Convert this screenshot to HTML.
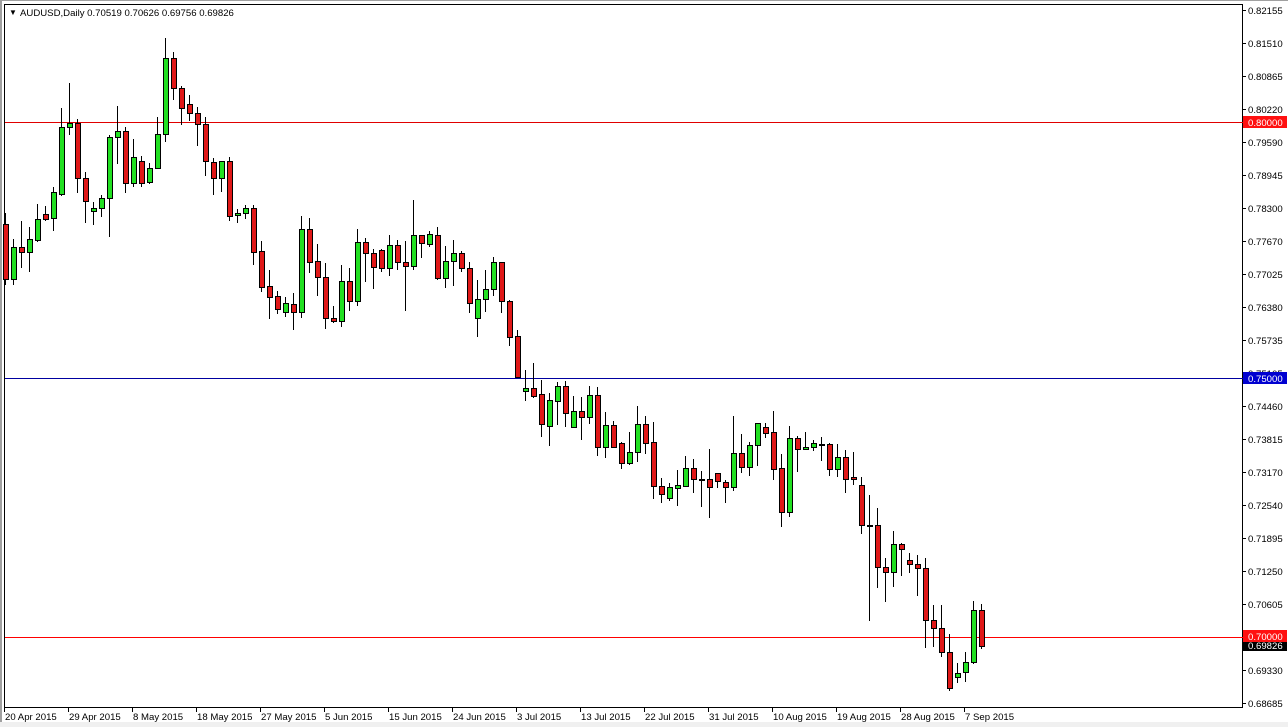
<!DOCTYPE html>
<html><head><meta charset="utf-8"><style>
html,body{margin:0;padding:0;background:#fff;}
body{width:1288px;height:727px;overflow:hidden;position:relative;font-family:"Liberation Sans",sans-serif;}
svg{position:absolute;left:0;top:0;}
</style></head><body>
<svg id="s" width="1288" height="727" xmlns="http://www.w3.org/2000/svg" font-family="Liberation Sans, sans-serif" font-size="9.6">
<rect x="0" y="0" width="1288" height="727" fill="#fff"/>
<rect x="0" y="0" width="2" height="727" fill="#a0a0a0"/>
<rect x="0" y="0" width="1288" height="1" fill="#a0a0a0"/>
<rect x="0" y="722" width="1288" height="5" fill="#f0f0f0"/>
<rect x="4.5" y="4.5" width="1238" height="703" fill="none" stroke="#000" stroke-width="1"/>
<rect x="5" y="122" width="1238" height="1" fill="#e00000"/>
<rect x="5" y="378" width="1238" height="1" fill="#0000a0"/>
<rect x="5" y="637" width="1238" height="1" fill="#ff0000"/>
<g id="c"></g>
<text x="9" y="15" font-size="8">▼</text>
<text x="20" y="16" font-size="9.6">AUDUSD,Daily  0.70519 0.70626 0.69756 0.69826</text>
<g id="ax"></g>
</svg>
<script>
var d=[
[5,213,224,279,285,'r'],[13,239,247,279,285,'g'],[21,221,247,252,268,'r'],[29,227,239,252,272,'g'],[37,204,219,240,242,'g'],[45,206,214,219,221,'r'],[53,187,192,218,231,'g'],[61,108,127,194,196,'g'],[69,83,123,127,135,'g'],[77,119,123,178,193,'r'],[85,172,178,201,223,'r'],[93,202,208,211,225,'g'],[101,195,198,208,217,'g'],[109,135,137,198,237,'g'],[117,106,131,137,164,'g'],[125,127,131,183,193,'r'],[133,139,157,183,187,'g'],[141,156,161,183,187,'r'],[149,163,168,182,184,'g'],[157,117,134,168,169,'g'],[165,38,58,134,142,'g'],[173,52,58,88,100,'r'],[181,86,88,108,125,'r'],[189,95,104,113,121,'r'],[197,107,113,124,146,'r'],[205,117,124,161,176,'r'],[213,158,162,178,195,'r'],[221,161,161,178,192,'g'],[229,157,161,216,221,'r'],[237,209,213,215,223,'g'],[245,205,208,213,219,'g'],
[253,205,208,252,265,'r'],[261,241,251,287,292,'r'],[269,270,286,297,319,'r'],[277,291,296,309,314,'r'],[285,297,303,312,317,'g'],[293,293,304,312,330,'r'],[301,216,229,312,318,'g'],[309,218,229,262,273,'r'],[317,244,261,277,296,'r'],[325,263,277,318,329,'r'],[333,306,318,321,323,'r'],[341,265,281,321,327,'g'],[349,268,281,301,311,'r'],[357,229,242,301,306,'g'],[365,238,242,253,282,'r'],[373,249,253,267,289,'r'],[381,249,250,268,272,'r'],[389,235,245,268,276,'g'],[397,240,245,262,270,'r'],[405,241,262,266,311,'r'],[413,200,235,266,270,'g'],[421,235,235,243,258,'r'],[429,231,234,244,247,'g'],[437,227,235,278,280,'r'],[445,246,261,278,288,'g'],[453,240,253,261,286,'g'],[461,251,253,268,272,'r'],[469,262,268,303,313,'r'],[477,280,299,318,337,'g'],[485,270,289,299,312,'g'],[493,257,262,289,296,'g'],[501,262,262,301,313,'r'],[509,300,301,337,346,'r'],
[517,330,336,377,378,'r'],[525,370,388,391,401,'g'],[533,363,388,396,398,'r'],[541,380,394,424,437,'r'],[549,393,400,426,446,'g'],[557,382,386,401,425,'g'],[565,381,386,413,427,'r'],[573,396,411,427,427,'g'],[581,397,411,417,440,'r'],[589,386,395,417,424,'g'],[597,387,395,447,456,'r'],[605,412,425,447,458,'g'],[613,421,425,447,448,'r'],[621,442,443,463,469,'r'],[629,432,452,463,465,'g'],[637,406,424,452,462,'g'],[645,416,424,443,454,'r'],[653,422,442,486,499,'r'],[661,478,486,494,503,'r'],[669,483,487,498,501,'g'],[677,470,485,488,506,'g'],[685,456,468,486,487,'g'],[693,459,468,479,493,'r'],[701,471,479,480,507,'r'],[709,449,479,487,518,'r'],[717,473,473,481,488,'r'],[725,480,482,487,503,'r'],[733,416,453,487,491,'g'],
[741,434,453,467,473,'r'],[749,442,445,467,476,'g'],[757,423,423,445,466,'g'],[765,423,427,433,438,'r'],[773,411,432,469,480,'r'],[781,454,468,512,527,'r'],[789,426,438,512,517,'g'],[797,436,438,449,472,'r'],[805,432,447,449,449,'g'],[813,440,443,447,451,'g'],[821,437,444,445,461,'r'],[829,443,444,469,476,'r'],[837,444,457,469,477,'g'],[845,450,457,479,493,'r'],[853,452,477,479,485,'r'],[861,477,485,525,534,'r'],[869,495,525,526,621,'r'],[877,508,525,567,588,'r'],[885,558,567,572,602,'r'],[893,531,544,572,587,'g'],[901,543,544,549,576,'r'],[909,553,560,564,573,'r'],[917,555,564,568,596,'r'],[925,558,568,620,648,'r'],[933,605,620,628,647,'r'],[941,605,628,652,657,'r'],[949,634,652,688,691,'r'],[957,663,673,677,683,'g'],[965,652,662,672,682,'g'],[973,601,610,662,664,'g'],[981,604,610,646,649,'r']];
var g=document.getElementById('c'),h='';
d.forEach(function(c){var x=c[0];
h+='<line x1="'+(x+0.5)+'" y1="'+c[1]+'" x2="'+(x+0.5)+'" y2="'+c[4]+'" stroke="#000"/>';
var bh=Math.max(c[3]-c[2],1);
h+='<rect x="'+(x-2+0.5)+'" y="'+(c[2]+0.5)+'" width="5" height="'+bh+'" fill="'+(c[5]=='g'?'#22e022':'#e01818')+'" stroke="#000" stroke-width="1"/>';});
g.innerHTML=h;
var ax=document.getElementById('ax'),a='';
var p=[['0.82155',10],['0.81510',43],['0.80865',76],['0.80220',109],['0.79590',142],['0.78945',175],['0.78300',208],['0.77670',241],['0.77025',274],['0.76380',307],['0.75735',340],['0.75105',373],['0.74460',406],['0.73815',439],['0.73170',472],['0.72540',505],['0.71895',538],['0.71250',571],['0.70605',604],['0.69330',670],['0.68685',703]];
p.forEach(function(q){a+='<line x1="1243" y1="'+(q[1]+0.5)+'" x2="1246" y2="'+(q[1]+0.5)+'" stroke="#000"/><text x="1248" y="'+(q[1]+4)+'" fill="#000">'+q[0]+'</text>';});
function box(t,y,bg){a+='<rect x="1243" y="'+(y-6)+'" width="44" height="12" fill="'+bg+'"/><text x="1248" y="'+(y+4)+'" fill="#fff">'+t+'</text>';}
box('0.80000',122,'#ff1010');box('0.75000',378,'#0000d0');box('0.69826',645,'#000');box('0.70000',636,'#ff1010');
var dl=['20 Apr 2015','29 Apr 2015','8 May 2015','18 May 2015','27 May 2015','5 Jun 2015','15 Jun 2015','24 Jun 2015','3 Jul 2015','13 Jul 2015','22 Jul 2015','31 Jul 2015','10 Aug 2015','19 Aug 2015','28 Aug 2015','7 Sep 2015'];
dl.forEach(function(t,i){var x=4+i*64;a+='<line x1="'+(x+0.5)+'" y1="708" x2="'+(x+0.5)+'" y2="712" stroke="#000"/><text x="'+(x+1)+'" y="720" fill="#000">'+t+'</text>';});
ax.innerHTML=a;
</script>
</body></html>
